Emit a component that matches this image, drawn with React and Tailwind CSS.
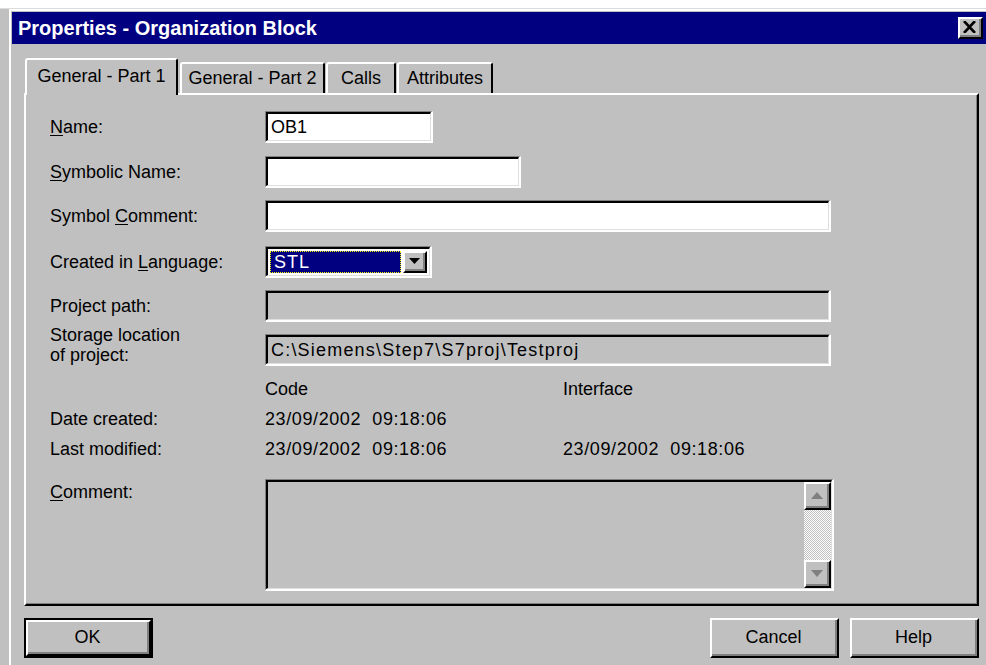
// Properties dialog for an organization block, classic Win9x chrome
const sunken =
  "border-t border-l border-t-[#808080] border-l-[#808080] border-b-2 border-r-2 border-b-white border-r-white";
const sunkenInner =
  "h-full border-t-2 border-l-2 border-t-black border-l-black border-b border-r border-b-[#dfdfdf] border-r-[#dfdfdf]";
const raised =
  "border-t-2 border-l-2 border-t-white border-l-white border-b-2 border-r-2 border-b-black border-r-black";
const raisedInner = "h-full border-b-2 border-r-2 border-b-[#808080] border-r-[#808080]";

function Mn({ children }) {
  return <span className="underline underline-offset-2">{children}</span>;
}

function Field({ width, disabled, children }) {
  return (
    <div className={`h-[32px] ${sunken}`} style={{ width }}>
      <div
        className={`${sunkenInner} flex items-center pl-[3px] ${
          disabled ? "bg-[#c0c0c0]" : "bg-white"
        }`}
      >
        {children}
      </div>
    </div>
  );
}

function Row({ label, className = "", children }) {
  return (
    <div className={`flex items-center ${className}`}>
      <div className="w-[215px] leading-[20px]">{label}</div>
      {children}
    </div>
  );
}

function Button({ children, isDefault }) {
  const body = (
    <div className={`h-full ${raised}`}>
      <div className={`${raisedInner} flex items-center justify-center`}>{children}</div>
    </div>
  );
  if (isDefault) {
    return <div className="w-[129px] h-[40px] border-2 border-black">{body}</div>;
  }
  return <div className="w-[129px] h-[40px]">{body}</div>;
}

function ScrollArrow({ up }) {
  return (
    <div className={`h-[28px] ${raised}`}>
      <div className={`${raisedInner} flex items-center justify-center`}>
        <svg width="12" height="7" viewBox="0 0 12 7">
          {up ? (
            <path d="M6 0 L12 7 L0 7 Z" fill="#808080" />
          ) : (
            <path d="M0 0 L12 0 L6 7 Z" fill="#808080" />
          )}
        </svg>
      </div>
    </div>
  );
}

function Tab({ label, active, width, className = "" }) {
  return (
    <div
      className={`${className} ${
        active ? "h-[37px] -mb-[2px] relative z-10 bg-[#c0c0c0]" : "h-[31px] mt-[4px]"
      } flex items-center justify-center rounded-t-[3px] border-t-2 border-l-2 border-t-white border-l-white border-r-2 border-r-black`}
      style={{ width }}
    >
      <span className={active ? "-mt-[3px]" : ""}>{label}</span>
    </div>
  );
}

export default function App() {
  return (
    <div className="w-[986px] h-[665px] overflow-hidden bg-white pt-[8px] font-['Liberation_Sans',Arial,sans-serif] text-[18px] text-black">
      <div className="h-full bg-[#c0c0c0] border-t border-[#dcdcdc] pl-[9px]">
        <div className="h-full border-t-2 border-l-2 border-white pl-px pt-px">
          {/* title bar */}
          <div className="h-[32px] bg-[#000080] flex items-center justify-between pl-[6px] pr-[3px]">
            <span className="text-white font-bold text-[20px]">
              Properties - Organization Block
            </span>
            <div className={`w-[25px] h-[22px] bg-[#c0c0c0] ${raised}`}>
              <div className={`${raisedInner} flex items-center justify-center`}>
                <svg width="13" height="12" viewBox="0 0 13 12">
                  <path d="M1 0 L12 12 M12 0 L1 12" stroke="#000" strokeWidth="2.6" />
                </svg>
              </div>
            </div>
          </div>

          <div className="pl-[12px] w-[967px]">
            {/* tabs */}
            <div className="flex items-start mt-[14px] h-[35px]">
              <Tab label="General - Part 1" active width={153} className="ml-px" />
              <Tab label="General - Part 2" width={145} className="ml-[2px]" />
              <Tab label="Calls" width={70} className="ml-px" />
              <Tab label="Attributes" width={96} className="ml-px" />
            </div>

            {/* tab page */}
            <div className="w-[955px] h-[513px] border-t-2 border-l-2 border-t-white border-l-white border-b-2 border-r-2 border-b-black border-r-black">
              <div className="h-full border-b border-r border-b-[#808080] border-r-[#808080] pl-[24px] pt-[16px]">
                <Row
                  label={
                    <>
                      <Mn>N</Mn>ame:
                    </>
                  }
                >
                  <Field width={168}>OB1</Field>
                </Row>
                <Row
                  className="mt-[13px]"
                  label={
                    <>
                      <Mn>S</Mn>ymbolic Name:
                    </>
                  }
                >
                  <Field width={256} />
                </Row>
                <Row
                  className="mt-[12px]"
                  label={
                    <>
                      Symbol <Mn>C</Mn>omment:
                    </>
                  }
                >
                  <Field width={566} />
                </Row>
                <Row
                  className="mt-[14px]"
                  label={
                    <>
                      Created in <Mn>L</Mn>anguage:
                    </>
                  }
                >
                  <div className={`h-[32px] w-[167px] ${sunken}`}>
                    <div className={`${sunkenInner} bg-white flex items-center p-[2px]`}>
                      <div className="h-full flex-1 bg-[#000080] border border-dotted border-[#ffff00] flex items-center pl-[3px] text-white tracking-[1px]">
                        STL
                      </div>
                      <div className={`h-full w-[24px] ml-[2px] bg-[#c0c0c0] ${raised}`}>
                        <div className={`${raisedInner} flex items-center justify-center`}>
                          <svg width="11" height="6" viewBox="0 0 11 6">
                            <path d="M0 0 L11 0 L5.5 6 Z" fill="#000" />
                          </svg>
                        </div>
                      </div>
                    </div>
                  </div>
                </Row>
                <Row className="mt-[12px]" label="Project path:">
                  <Field width={566} disabled />
                </Row>
                <div className="flex mt-[12px]">
                  <div className="w-[215px] leading-[20px] -mt-[9px]">
                    Storage location
                    <br />
                    of project:
                  </div>
                  <Field width={566} disabled>
                    <span className="tracking-[1.2px]">C:\Siemens\Step7\S7proj\Testproj</span>
                  </Field>
                </div>

                {/* timestamps */}
                <div className="flex leading-[20px] mt-[13px]">
                  <div className="w-[215px]" />
                  <div className="w-[298px]">Code</div>
                  <div>Interface</div>
                </div>
                <div className="flex leading-[20px] mt-[10px] whitespace-pre">
                  <div className="w-[215px]">Date created:</div>
                  <div className="w-[298px] tracking-[0.6px]">23/09/2002  09:18:06</div>
                </div>
                <div className="flex leading-[20px] mt-[10px] whitespace-pre">
                  <div className="w-[215px]">Last modified:</div>
                  <div className="w-[298px] tracking-[0.6px]">23/09/2002  09:18:06</div>
                  <div className="tracking-[0.6px]">23/09/2002  09:18:06</div>
                </div>

                <div className="flex mt-[20px]">
                  <div className="w-[215px] leading-[20px] mt-[3px]">
                    <Mn>C</Mn>omment:
                  </div>
                  <div className={`h-[112px] w-[569px] ${sunken}`}>
                    <div className={`${sunkenInner} bg-[#c0c0c0] flex justify-end`}>
                      <div className="w-[27px] h-full flex flex-col">
                        <ScrollArrow up />
                        <div className="flex-1 bg-[image:repeating-conic-gradient(#ffffff_0_25%,#c0c0c0_0_50%)] bg-[length:2px_2px]" />
                        <ScrollArrow />
                      </div>
                    </div>
                  </div>
                </div>
              </div>
            </div>

            {/* dialog buttons */}
            <div className="w-[955px] flex justify-between mt-[12px]">
              <Button isDefault>OK</Button>
              <div className="flex gap-[11px]">
                <Button>Cancel</Button>
                <Button>Help</Button>
              </div>
            </div>
          </div>
        </div>
      </div>
    </div>
  );
}
